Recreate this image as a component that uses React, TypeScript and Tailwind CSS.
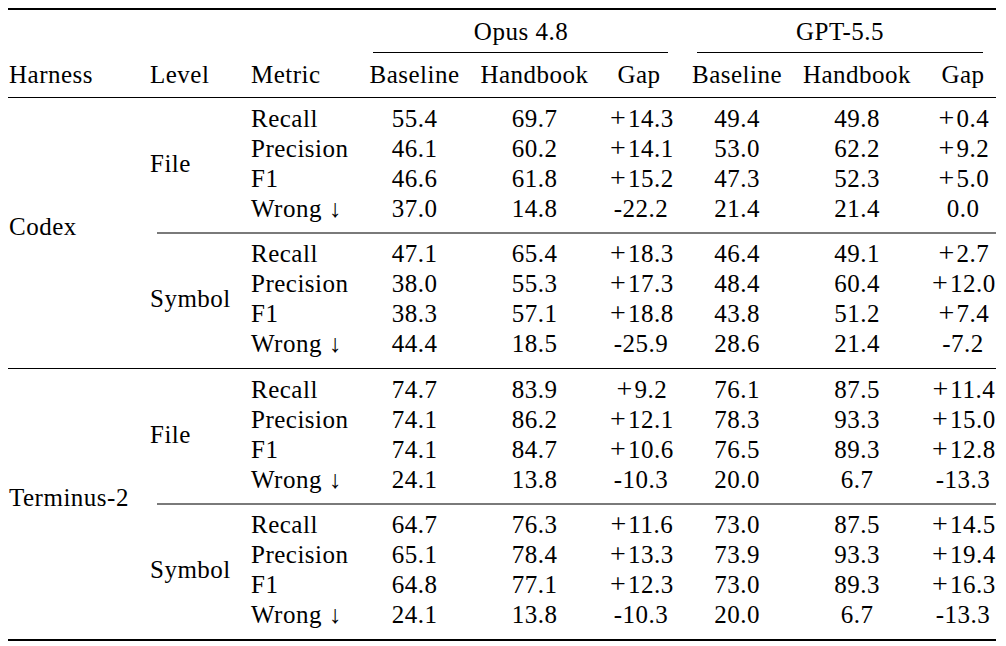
import React from "react";

type Row = [string, string, string, string, string, string, string];

const blocks: { harness: string; subs: { level: string; rows: Row[] }[] }[] = [
  {
    harness: "Codex",
    subs: [
      {
        level: "File",
        rows: [
          ["Recall", "55.4", "69.7", "+14.3", "49.4", "49.8", "+0.4"],
          ["Precision", "46.1", "60.2", "+14.1", "53.0", "62.2", "+9.2"],
          ["F1", "46.6", "61.8", "+15.2", "47.3", "52.3", "+5.0"],
          ["Wrong ↓", "37.0", "14.8", "-22.2", "21.4", "21.4", "0.0"],
        ],
      },
      {
        level: "Symbol",
        rows: [
          ["Recall", "47.1", "65.4", "+18.3", "46.4", "49.1", "+2.7"],
          ["Precision", "38.0", "55.3", "+17.3", "48.4", "60.4", "+12.0"],
          ["F1", "38.3", "57.1", "+18.8", "43.8", "51.2", "+7.4"],
          ["Wrong ↓", "44.4", "18.5", "-25.9", "28.6", "21.4", "-7.2"],
        ],
      },
    ],
  },
  {
    harness: "Terminus-2",
    subs: [
      {
        level: "File",
        rows: [
          ["Recall", "74.7", "83.9", "+9.2", "76.1", "87.5", "+11.4"],
          ["Precision", "74.1", "86.2", "+12.1", "78.3", "93.3", "+15.0"],
          ["F1", "74.1", "84.7", "+10.6", "76.5", "89.3", "+12.8"],
          ["Wrong ↓", "24.1", "13.8", "-10.3", "20.0", "6.7", "-13.3"],
        ],
      },
      {
        level: "Symbol",
        rows: [
          ["Recall", "64.7", "76.3", "+11.6", "73.0", "87.5", "+14.5"],
          ["Precision", "65.1", "78.4", "+13.3", "73.9", "93.3", "+19.4"],
          ["F1", "64.8", "77.1", "+12.3", "73.0", "89.3", "+16.3"],
          ["Wrong ↓", "24.1", "13.8", "-10.3", "20.0", "6.7", "-13.3"],
        ],
      },
    ],
  },
];

function Gap({ v }: { v: string }) {
  if (v.startsWith("+")) {
    return (
      <span className="whitespace-nowrap">
        <span className="inline-block w-[19.5px] text-center text-[28px] leading-none">+</span>
        {v.slice(1)}
      </span>
    );
  }
  return <span className="whitespace-nowrap">{v}</span>;
}

function DataRow({ r }: { r: Row }) {
  return (
    <div className="grid h-[30px] grid-cols-[118px_103px_137px_76px_116px_124px_77px] leading-[30px]">
      <div className="whitespace-nowrap pl-[6px]">{r[0]}</div>
      <div className="flex justify-center">{r[1]}</div>
      <div className="flex justify-center">{r[2]}</div>
      <div className="flex justify-center">
        <Gap v={r[3]} />
      </div>
      <div className="flex justify-center">{r[4]}</div>
      <div className="flex justify-center">{r[5]}</div>
      <div className="flex justify-center pl-[11px]">
        <Gap v={r[6]} />
      </div>
    </div>
  );
}

export default function App() {
  return (
    <div className="min-h-[646px] w-[1006px] bg-white text-black font-['Liberation_Serif','Times_New_Roman',serif] text-[25px] tracking-[0.5px]">
      <div className="ml-[8px] w-[988px] pt-[7.5px]">
        {/* top rule */}
        <div className="h-[2.5px] bg-black" />

        {/* group header row */}
        <div className="grid h-[42px] grid-cols-[355px_316px_317px] pt-[6.5px] leading-[30px]">
          <div />
          <div className="flex justify-center">Opus 4.8</div>
          <div className="flex justify-center pl-[5px]">GPT-5.5</div>
        </div>

        {/* cmidrules */}
        <div className="grid h-[1.3px] grid-cols-[355px_316px_317px]">
          <div />
          <div className="ml-[10px] mr-[11px] bg-black" />
          <div className="ml-[18px] mr-[13px] bg-black" />
        </div>

        {/* column header row */}
        <div className="grid h-[43.5px] grid-cols-[136px_101px_118px_103px_137px_76px_116px_124px_77px] pt-[6.4px] leading-[30px]">
          <div className="pl-[1px]">Harness</div>
          <div className="pl-[6px]">Level</div>
          <div className="pl-[6px]">Metric</div>
          <div className="flex justify-center">Baseline</div>
          <div className="flex justify-center">Handbook</div>
          <div className="flex justify-center pr-[4px]">Gap</div>
          <div className="flex justify-center">Baseline</div>
          <div className="flex justify-center">Handbook</div>
          <div className="flex justify-center pl-[11px]">Gap</div>
        </div>

        {blocks.map((b, bi) => (
          <div key={b.harness}>
            <div className="h-[1.5px] bg-black" />
            <div className="flex">
              <div className="flex w-[136px] items-center pb-[13px] pl-[1px] leading-[30px] whitespace-nowrap">
                {b.harness}
              </div>
              <div className="w-[852px]">
                {b.subs.map((s, si) => (
                  <div key={s.level}>
                    {si > 0 && <div className="ml-[13px] h-[1.5px] bg-[#7a7a7a]" />}
                    <div className="flex pt-[5.5px] pb-[8.5px]">
                      <div className="flex w-[101px] items-center pl-[6px] leading-[30px]">
                        {s.level}
                      </div>
                      <div className="w-[751px]">
                        {s.rows.map((r, ri) => (
                          <DataRow key={ri} r={r} />
                        ))}
                      </div>
                    </div>
                  </div>
                ))}
              </div>
            </div>
            {bi === blocks.length - 1 && <div className="h-[2.5px] bg-black" />}
          </div>
        ))}
      </div>
    </div>
  );
}
